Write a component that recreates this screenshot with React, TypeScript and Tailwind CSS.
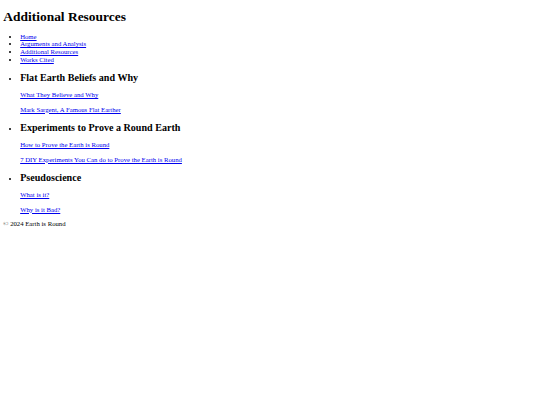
const nav = ['Home', 'Arguments and Analysis', 'Additional Resources', 'Works Cited']

const sections = [
  {
    title: 'Flat Earth Beliefs and Why',
    links: ['What They Believe and Why', 'Mark Sargent, A Famous Flat Earther'],
  },
  {
    title: 'Experiments to Prove a Round Earth',
    links: [
      'How to Prove the Earth is Round',
      '7 DIY Experiments You Can do to Prove the Earth is Round',
    ],
  },
  {
    title: 'Pseudoscience',
    links: ['What is it?', 'Why is it Bad?'],
  },
]

export default function App() {
  return (
    <div className="min-h-[405px] bg-white">
      <div className="m-[3.36px] font-['Liberation_Serif','Times_New_Roman',serif] text-[6.72px] leading-[7.75px] text-black">
        <header>
          <h1 className="mt-[9px] mb-[8px] text-[13.44px] font-bold leading-[15.5px]">Additional Resources</h1>
          <nav>
            <ul className="my-[6.72px] list-disc pl-[16.8px]">
              {nav.map((item) => (
                <li key={item}>
                  <a href="#" className="text-[#0000ee] underline">
                    {item}
                  </a>
                </li>
              ))}
            </ul>
          </nav>
        </header>

        <main>
          <ul className="my-[6.72px] list-disc pl-[16.8px]">
            {sections.map((s) => (
              <li key={s.title}>
                <h2 className="my-[8.1px] text-[10.08px] font-bold leading-[11.6px]">{s.title}</h2>
                {s.links.map((link) => (
                  <p key={link} className="my-[6.72px]">
                    <a href="#" className="text-[#0000ee] underline">
                      {link}
                    </a>
                  </p>
                ))}
              </li>
            ))}
          </ul>
        </main>

        <footer>
          <p className="my-[6.72px]">© 2024 Earth is Round</p>
        </footer>
      </div>
    </div>
  )
}
